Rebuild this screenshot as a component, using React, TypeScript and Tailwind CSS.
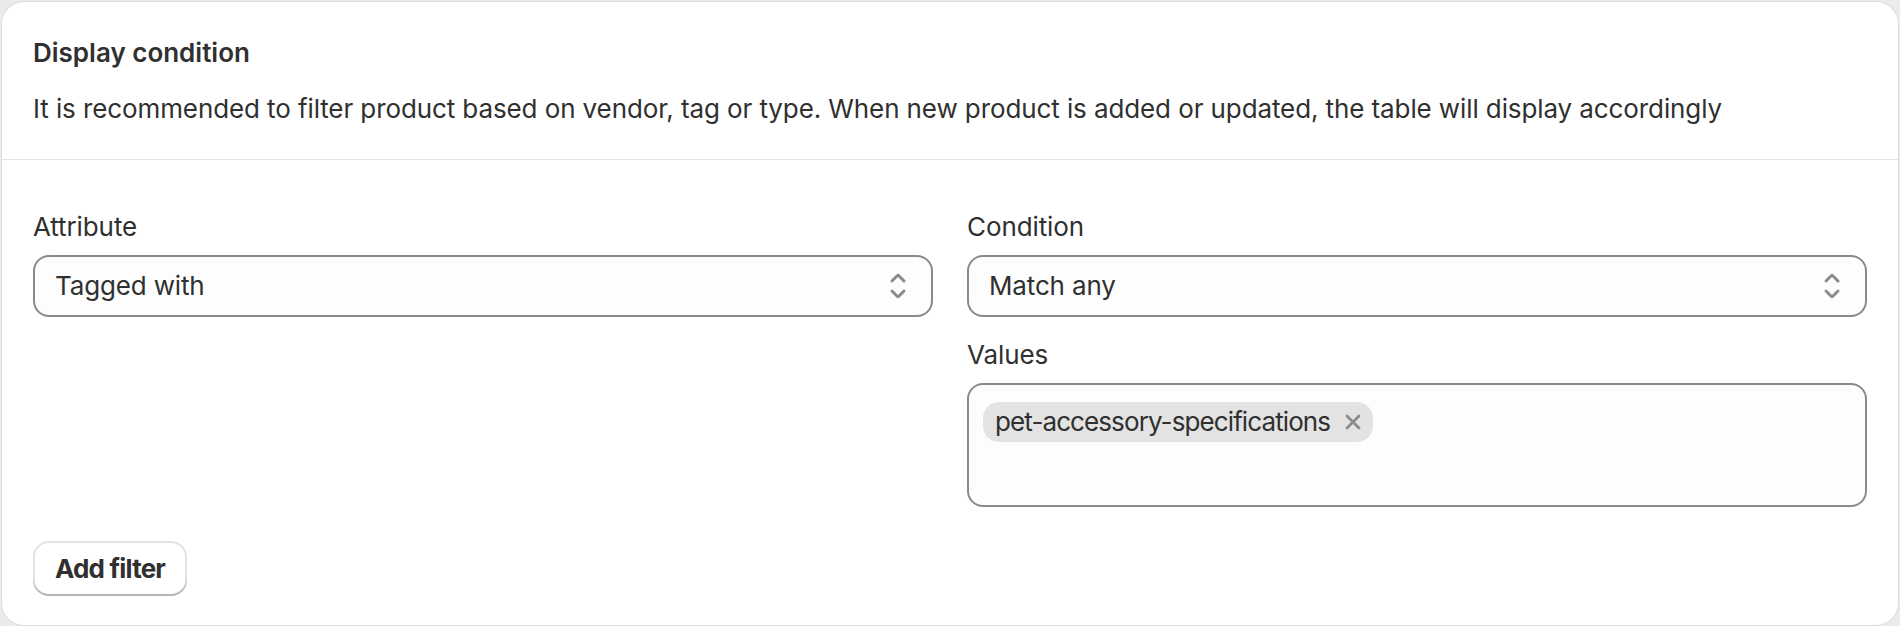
import React from "react";

function SelectIcon() {
  return (
    <svg viewBox="0 0 20 20" className="w-[40px] h-[40px] shrink-0" fill="#8a8a8a">
      <path d="M10.884 4.323a1.25 1.25 0 0 0-1.768 0l-2.646 2.647a.75.75 0 0 0 1.06 1.06l2.47-2.47 2.47 2.47a.75.75 0 1 0 1.06-1.06l-2.646-2.647Z" />
      <path d="m13.53 13.03-2.646 2.647a1.25 1.25 0 0 1-1.768 0l-2.646-2.647a.75.75 0 0 1 1.06-1.06l2.47 2.47 2.47-2.47a.75.75 0 0 1 1.06 1.06Z" />
    </svg>
  );
}

function XIcon() {
  return (
    <svg viewBox="0 0 16 16" className="w-[16px] h-[16px] shrink-0" fill="none" stroke="#8a8a8a" strokeWidth="2.8" strokeLinecap="round">
      <path d="M2 2L14 14M14 2L2 14" />
    </svg>
  );
}

function Select({ value }: { value: string }) {
  return (
    <div className="flex h-[62px] items-center justify-between rounded-[16px] border-2 border-[#8a8a8a] bg-[#fdfdfd] pl-[20px] pr-[13px]">
      <span className="text-[26px] leading-[40px] tracking-[-0.15px] text-[#303030]">{value}</span>
      <SelectIcon />
    </div>
  );
}

export default function App() {
  return (
    <div
      className="min-h-screen bg-[#ebebeb] px-[2px] pt-[2px]"
      style={{ fontFamily: "Inter, 'Noto Sans', sans-serif" }}
    >
      <div className="rounded-[22px] bg-white shadow-[0_0_0_1px_#dedede] text-[#303030]">
        <div className="px-[31px] pt-[31px] pb-[30px]">
          <h2 className="text-[26px] font-semibold leading-[40px]">Display condition</h2>
          <p className="mt-[16px] text-[26px] leading-[40px] tracking-[-0.1px]">
            It is recommended to filter product based on vendor, tag or type. When new product is added or updated, the table will display accordingly
          </p>
        </div>
        <div className="border-t border-[#e3e3e3] px-[31px] pt-[47px] pb-[29px]">
          <div className="grid grid-cols-2 gap-x-[34px]">
            <div className="flex flex-col">
              <label className="text-[26px] leading-[40px] tracking-[-0.1px]">Attribute</label>
              <div className="mt-[8px]">
                <Select value="Tagged with" />
              </div>
            </div>
            <div className="flex flex-col">
              <label className="text-[26px] leading-[40px] tracking-[-0.1px]">Condition</label>
              <div className="mt-[8px]">
                <Select value="Match any" />
              </div>
              <label className="mt-[18px] text-[26px] leading-[40px] tracking-[-0.1px]">Values</label>
              <div className="mt-[8px] h-[124px] rounded-[16px] border-2 border-[#8a8a8a] bg-[#fdfdfd] pl-[14px] pt-[17px]">
                <div className="inline-flex h-[40px] items-center gap-[15px] rounded-[16px] bg-[#e3e3e3] pl-[12px] pr-[12px]">
                  <span className="text-[26px] leading-[40px] tracking-[-0.9px] text-[#303030]">pet-accessory-specifications</span>
                  <XIcon />
                </div>
              </div>
            </div>
          </div>
          <button className="mt-[34px] flex h-[55px] items-center rounded-[16px] bg-white px-[22px] text-[26px] font-bold tracking-[-0.8px] text-[#303030] shadow-[inset_0_-2px_0_0_#b5b5b5,inset_0_0_0_2px_#e3e3e3]">
            Add filter
          </button>
        </div>
      </div>
    </div>
  );
}
